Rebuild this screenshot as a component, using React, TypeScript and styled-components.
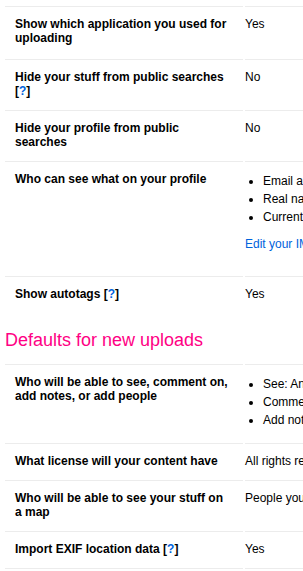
import React from 'react';
import styled, { createGlobalStyle } from 'styled-components';

type Setting = {
  label: React.ReactNode;
  value?: string;
  items?: string[];
  link?: string;
};

const Help = () => (
  <>
    {' '}[<HelpLink href="#">?</HelpLink>]
  </>
);

const privacy: Setting[] = [
  { label: 'Show which application you used for uploading', value: 'Yes' },
  { label: <>Hide your stuff from public searches<Help /></>, value: 'No' },
  { label: 'Hide your profile from public searches', value: 'No' },
  {
    label: 'Who can see what on your profile',
    items: ['Email address: Only you', 'Real name: Anyone', 'Current city: Anyone'],
    link: 'Edit your IM names',
  },
  { label: <>Show autotags<Help /></>, value: 'Yes' },
];

const uploads: Setting[] = [
  {
    label: 'Who will be able to see, comment on, add notes, or add people',
    items: ['See: Anyone (public)', 'Comment on: Any Flickr member', 'Add notes, tags, and people: Your contacts'],
  },
  { label: 'What license will your content have', value: 'All rights reserved' },
  { label: 'Who will be able to see your stuff on a map', value: 'People you follow' },
  { label: <>Import EXIF location data<Help /></>, value: 'Yes' },
  { label: 'Hide EXIF data', value: 'No' },
];

function SettingsTable({ rows }: { rows: Setting[] }) {
  return (
    <Table>
      {rows.map((r, idx) => (
        <Row key={idx}>
          <Label>{r.label}</Label>
          <Value>
            {r.value}
            {r.items && (
              <Bullets>
                {r.items.map(it => <Bullet key={it}>{it}</Bullet>)}
              </Bullets>
            )}
            {r.link && <EditLine><TextLink href="#">{r.link}</TextLink></EditLine>}
          </Value>
        </Row>
      ))}
    </Table>
  );
}

export default function App() {
  return (
    <>
      <GlobalStyle />
      <Page>
        <SettingsTable rows={privacy} />
        <SectionTitle>Defaults for new uploads</SectionTitle>
        <SettingsTable rows={uploads} />
      </Page>
    </>
  );
}

const GlobalStyle = createGlobalStyle`
  html, body { margin: 0; padding: 0; background: #fff; overflow: hidden; }
  body {
    font-family: "Liberation Sans", Arial, Helvetica, sans-serif;
    font-size: 12px;
    line-height: 14px;
    color: #000;
  }
`;

const Page = styled.div`
  padding: 6px 0 0 5px;
  width: 700px;
`;

const Table = styled.div`
  display: flex;
  flex-direction: column;
`;

const Row = styled.div`
  display: grid;
  grid-template-columns: 238px 420px;
  column-gap: 2px;

  &:first-child > * { padding-bottom: 14px; }
`;

const Label = styled.div`
  border-top: 1px solid #ececec;
  padding: 10px 12px 12px 10px;
  font-weight: bold;
`;

const Value = styled.div`
  border-top: 1px solid #ececec;
  padding: 10px 0 12px 0;
  white-space: nowrap;
`;

const Bullets = styled.ul`
  margin: 0;
  padding-left: 18px;
`;

const Bullet = styled.li`
  line-height: 18px;
`;

const EditLine = styled.p`
  margin: 11px 0 13px;
`;

const TextLink = styled.a`
  color: #0063dc;
  text-decoration: none;
`;

const HelpLink = styled.a`
  color: #0063dc;
  text-decoration: none;
`;

const SectionTitle = styled.h3`
  margin: 17px 0 13px;
  color: #ff0084;
  font-size: 18px;
  line-height: 21px;
  font-weight: normal;
`;
